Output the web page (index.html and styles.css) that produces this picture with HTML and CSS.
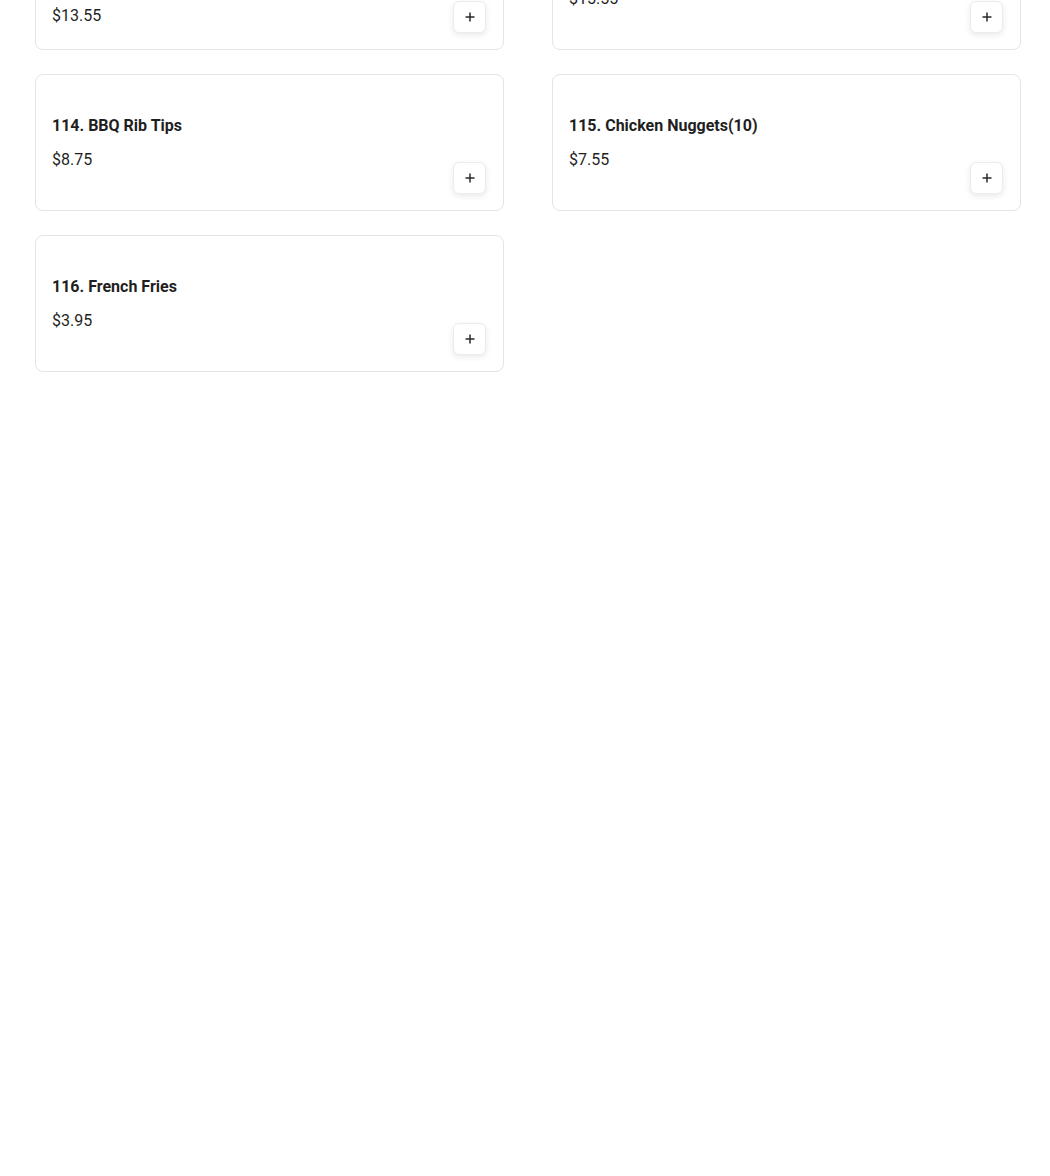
FILE: index.html
```html
<!DOCTYPE html>
<html lang="en">
<head>
<meta charset="utf-8">
<title>Menu</title>
<link rel="stylesheet" href="styles.css">
</head>
<body>
<main class="menu">
  <div class="grid">
    <article class="card">
      <div class="info">
        <h3 class="title">112. Chicken Wings(10)</h3>
        <p class="desc">Served with fries</p>
        <p class="price">$13.55</p>
      </div>
      <button class="add" aria-label="Add"><svg viewBox="0 0 10 10" width="10" height="10"><path d="M5 0.5v9M0.5 5h9"/></svg></button>
    </article>
    <article class="card">
      <div class="info">
        <h3 class="title">113. Fried Shrimp</h3>
        <p class="price">$15.55</p>
      </div>
      <button class="add" aria-label="Add"><svg viewBox="0 0 10 10" width="10" height="10"><path d="M5 0.5v9M0.5 5h9"/></svg></button>
    </article>
    <article class="card">
      <div class="info">
        <h3 class="title">114. BBQ Rib Tips</h3>
        <p class="price">$8.75</p>
      </div>
      <button class="add" aria-label="Add"><svg viewBox="0 0 10 10" width="10" height="10"><path d="M5 0.5v9M0.5 5h9"/></svg></button>
    </article>
    <article class="card">
      <div class="info">
        <h3 class="title">115. Chicken Nuggets(10)</h3>
        <p class="price">$7.55</p>
      </div>
      <button class="add" aria-label="Add"><svg viewBox="0 0 10 10" width="10" height="10"><path d="M5 0.5v9M0.5 5h9"/></svg></button>
    </article>
    <article class="card">
      <div class="info">
        <h3 class="title">116. French Fries</h3>
        <p class="price">$3.95</p>
      </div>
      <button class="add" aria-label="Add"><svg viewBox="0 0 10 10" width="10" height="10"><path d="M5 0.5v9M0.5 5h9"/></svg></button>
    </article>
  </div>
</main>
</body>
</html>
```

FILE: styles.css
```css
html, body {
  margin: 0;
  padding: 0;
  background: #fff;
}
body {
  font-family: Roboto, "Liberation Sans", Arial, sans-serif;
  color: #1f1f1f;
}
.menu {
  padding: 0 29px 0 35px;
}
.grid {
  margin-top: -87px;
  display: grid;
  grid-template-columns: 469px 469px;
  column-gap: 48px;
  row-gap: 24px;
  align-items: start;
}
.card {
  box-sizing: border-box;
  height: 137px;
  border: 1px solid #e4e4e4;
  border-radius: 8px;
  padding: 16px;
  display: grid;
  grid-template-columns: 1fr auto;
  background: #fff;
}
.info {
  padding-top: 23px;
}
.title {
  margin: 0;
  font-size: 16px;
  line-height: 24px;
  font-weight: 700;
  color: #1f1f1f;
}
.desc {
  margin: 0;
  font-size: 13px;
  line-height: 17px;
  color: #666;
}
.price {
  margin: 10px 0 0;
  font-size: 16px;
  line-height: 24px;
  font-weight: 400;
  color: #1f1f1f;
}
.add {
  align-self: end;
  width: 33px;
  height: 32px;
  padding: 0;
  margin: 0 1px 0 0;
  border: 1px solid #ececec;
  border-radius: 6px;
  background: #fff;
  box-shadow: 0 2px 6px rgba(0, 0, 0, 0.09);
  display: flex;
  align-items: center;
  justify-content: center;
  cursor: pointer;
}
.add svg {
  display: block;
  stroke: #2a2a2a;
  stroke-width: 1.5;
  fill: none;
}
```
